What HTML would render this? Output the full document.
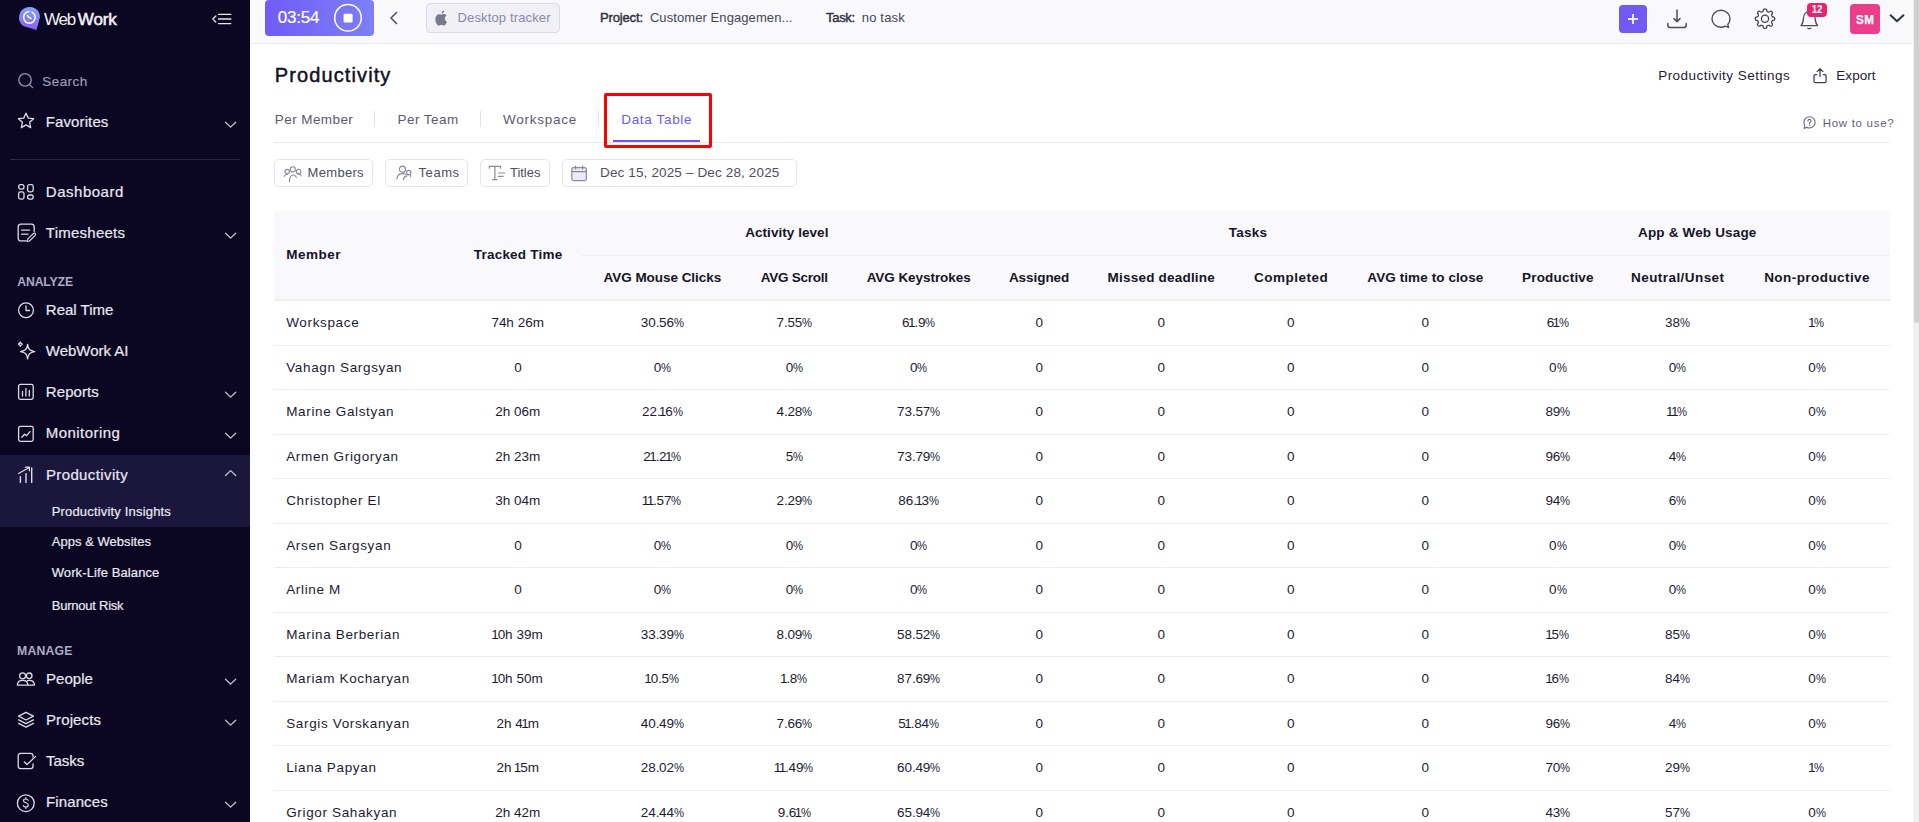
<!DOCTYPE html>
<html><head><meta charset="utf-8"><style>
html,body{margin:0;padding:0;}
body{width:1919px;height:822px;overflow:hidden;position:relative;background:#fff;font-family:"Liberation Sans",sans-serif;}
.t{position:absolute;line-height:1;white-space:nowrap;}
.sb{-webkit-text-stroke:0.2px currentColor;}
.pc{display:inline-block;width:10px;transform:scaleX(0.833);transform-origin:0 0;}
svg{display:block;}
</style></head><body>
<div style="position:absolute;left:0px;top:0px;width:250px;height:822px;background:#0b0722;"></div><div style="position:absolute;left:0px;top:455px;width:250px;height:72px;background:#1b163c;"></div><svg style="position:absolute;left:17px;top:5px;" width="26" height="28" viewBox="0 0 26 28" fill="none"><defs><linearGradient id="lg" x1="0" y1="0" x2="0" y2="1"><stop offset="0" stop-color="#7ea6ff"/><stop offset="1" stop-color="#8a5cf5"/></linearGradient></defs>
<path d="M13.2 2.1 C19.4 2.3 23 6.8 22.9 12.5 L19.5 24.9 L8.6 21.7 C4.2 20.4 2 16.9 2 12.7 C2 6.5 6.8 1.9 13.2 2.1 Z" fill="url(#lg)"/>
<path d="M14.85 7.14 A5.8 5.8 0 1 1 11.9 6.62" stroke="#fff" stroke-width="1.5" stroke-linecap="round"/>
<path d="M10.4 10.45 L12.3 12.7 L14.1 13.4" stroke="#fff" stroke-width="1.4" stroke-linecap="round" stroke-linejoin="round"/></svg><div class="t" style="left:44.00px;top:11.00px;font-size:17px;color:#f2f1f8;letter-spacing:-1.190px;">Web</div><div class="t" style="left:77.80px;top:11.00px;font-size:17px;color:#f2f1f8;letter-spacing:-0.113px;-webkit-text-stroke:0.55px #f2f1f8;">Work</div><svg style="position:absolute;left:210px;top:12px;" width="24" height="14" viewBox="0 0 24 14" fill="none"><path d="M5.8 4 L2.8 7 L5.8 10" stroke="#e6e4ef" stroke-width="1.3" stroke-linecap="round" stroke-linejoin="round"/>
<path d="M8.5 2.4 H20.8 M8.5 7 H20.8 M8.5 11.6 H20.8" stroke="#e6e4ef" stroke-width="1.4" stroke-linecap="round"/></svg><svg style="position:absolute;left:16px;top:72px;" width="20" height="18" viewBox="0 0 20 18" fill="none"><circle cx="9" cy="7.9" r="6.2" stroke="#9794ae" stroke-width="1.3"/><path d="M13.4 12.4 L16.6 15.6" stroke="#9794ae" stroke-width="1.3" stroke-linecap="round"/></svg><div class="t sb" style="left:42.30px;top:75.00px;font-size:13.5px;color:#9d9ab4;letter-spacing:0.421px;">Search</div><svg style="position:absolute;left:16px;top:111px;" width="20" height="20" viewBox="0 0 20 20" fill="none"><path d="M10 2.2 L12.3 7.1 L17.6 7.7 L13.6 11.3 L14.7 16.6 L10 13.9 L5.3 16.6 L6.4 11.3 L2.4 7.7 L7.7 7.1 Z" stroke="#dddbe8" stroke-width="1.3" stroke-linejoin="round"/></svg><div class="t sb" style="left:45.80px;top:114.00px;font-size:15px;color:#e9e8f3;letter-spacing:0.106px;">Favorites</div><svg style="position:absolute;left:222px;top:119px;" width="16" height="10" viewBox="0 0 16 10" fill="none"><path d="M3.5 3.2 L8.6 8.1 L13.7 3.2" stroke="#c6c4d3" stroke-width="1.3" stroke-linecap="round" stroke-linejoin="round"/></svg><div style="position:absolute;left:10px;top:159px;width:230px;height:1px;background:#2c2946;"></div><svg style="position:absolute;left:16px;top:183px;" width="20" height="20" viewBox="0 0 20 20" fill="none"><rect x="2.6" y="1.7" width="5.4" height="4.4" rx="2" stroke="#dddbe8" stroke-width="1.3"/>
<rect x="2.6" y="8.9" width="5.4" height="7.2" rx="1.8" stroke="#dddbe8" stroke-width="1.3"/>
<rect x="11.6" y="1.7" width="5.6" height="7.1" rx="1.8" stroke="#dddbe8" stroke-width="1.3"/>
<rect x="11.6" y="12" width="5.6" height="4.1" rx="2" stroke="#dddbe8" stroke-width="1.3"/></svg><div class="t sb" style="left:45.80px;top:184.00px;font-size:15px;color:#e9e8f3;letter-spacing:0.519px;">Dashboard</div><svg style="position:absolute;left:16px;top:223px;" width="22" height="22" viewBox="0 0 22 22" fill="none"><path d="M10.2 17.9 H5 C3.2 17.9 2.2 16.9 2.2 15.1 V4 C2.2 2.2 3.2 1.2 5 1.2 H15.4 C17.2 1.2 18.2 2.2 18.2 4 V8.6" stroke="#dddbe8" stroke-width="1.3" stroke-linecap="round"/>
<path d="M5.6 7.2 H13.4 M5.6 11.2 H12" stroke="#dddbe8" stroke-width="1.3" stroke-linecap="round"/>
<path d="M11.2 18.4 L11.7 16.2 L17.4 10.5 C17.9 10 18.7 10 19.2 10.5 C19.7 11 19.7 11.8 19.2 12.3 L13.5 18 Z" stroke="#dddbe8" stroke-width="1.1" stroke-linejoin="round"/></svg><div class="t sb" style="left:45.80px;top:225.00px;font-size:15px;color:#e9e8f3;letter-spacing:0.250px;">Timesheets</div><svg style="position:absolute;left:222px;top:230px;" width="16" height="10" viewBox="0 0 16 10" fill="none"><path d="M3.5 3.2 L8.6 8.1 L13.7 3.2" stroke="#c6c4d3" stroke-width="1.3" stroke-linecap="round" stroke-linejoin="round"/></svg><div class="t" style="left:17.30px;top:276.00px;font-size:12.2px;color:#aeabc4;font-weight:bold;letter-spacing:-0.114px;">ANALYZE</div><svg style="position:absolute;left:16px;top:300px;" width="20" height="20" viewBox="0 0 20 20" fill="none"><circle cx="10" cy="10.2" r="7.4" stroke="#dddbe8" stroke-width="1.3"/><path d="M10 6 V10.5 H13.5" stroke="#dddbe8" stroke-width="1.3" stroke-linecap="round" stroke-linejoin="round"/></svg><div class="t sb" style="left:45.80px;top:302.00px;font-size:15px;color:#e9e8f3;">Real Time</div><svg style="position:absolute;left:16px;top:340px;" width="21" height="21" viewBox="0 0 21 21" fill="none"><path d="M11.6 4.4 C12.3 9.3 13.6 10.6 18.6 11.6 C13.6 12.6 12.3 13.9 11.6 18.8 C10.9 13.9 9.6 12.6 4.6 11.6 C9.6 10.6 10.9 9.3 11.6 4.4 Z" stroke="#dddbe8" stroke-width="1.3" stroke-linejoin="round"/>
<path d="M4.3 1.6 C4.5 3.4 4.9 3.8 6.6 4.1 C4.9 4.4 4.5 4.8 4.3 6.6 C4.1 4.8 3.7 4.4 2 4.1 C3.7 3.8 4.1 3.4 4.3 1.6 Z" stroke="#dddbe8" stroke-width="1.1" stroke-linecap="round"/></svg><div class="t sb" style="left:45.80px;top:343.00px;font-size:15px;color:#e9e8f3;letter-spacing:-0.022px;">WebWork AI</div><svg style="position:absolute;left:16px;top:382px;" width="20" height="20" viewBox="0 0 20 20" fill="none"><rect x="2.6" y="2.4" width="14.6" height="15" rx="1.8" stroke="#dddbe8" stroke-width="1.3"/><path d="M6.5 14 V9.5 M9.9 14 V6.5 M13.3 14 V8.5" stroke="#dddbe8" stroke-width="1.3" stroke-linecap="round"/></svg><div class="t sb" style="left:45.80px;top:384.00px;font-size:15px;color:#e9e8f3;letter-spacing:0.083px;">Reports</div><svg style="position:absolute;left:222px;top:389px;" width="16" height="10" viewBox="0 0 16 10" fill="none"><path d="M3.5 3.2 L8.6 8.1 L13.7 3.2" stroke="#c6c4d3" stroke-width="1.3" stroke-linecap="round" stroke-linejoin="round"/></svg><svg style="position:absolute;left:16px;top:424px;" width="20" height="20" viewBox="0 0 20 20" fill="none"><rect x="2.6" y="2.4" width="14.6" height="15" rx="1.8" stroke="#dddbe8" stroke-width="1.3"/><path d="M5.8 13.2 L8.6 10.2 L10.6 11.6 L14 7.6" stroke="#dddbe8" stroke-width="1.3" stroke-linecap="round" stroke-linejoin="round"/></svg><div class="t sb" style="left:45.80px;top:425.00px;font-size:15px;color:#e9e8f3;letter-spacing:0.439px;">Monitoring</div><svg style="position:absolute;left:222px;top:430px;" width="16" height="10" viewBox="0 0 16 10" fill="none"><path d="M3.5 3.2 L8.6 8.1 L13.7 3.2" stroke="#c6c4d3" stroke-width="1.3" stroke-linecap="round" stroke-linejoin="round"/></svg><svg style="position:absolute;left:16px;top:465px;" width="20" height="20" viewBox="0 0 20 20" fill="none"><path d="M4.4 17.4 V11.6 M10 17.4 V8.6 M15.7 17.4 V3" stroke="#dddbe8" stroke-width="1.4" stroke-linecap="round"/><path d="M2.6 8.6 L13.2 2.4 M9.4 2.2 H13.4 V5.8" stroke="#dddbe8" stroke-width="1.2" stroke-linecap="round" stroke-linejoin="round"/></svg><div class="t sb" style="left:45.90px;top:467.00px;font-size:15px;color:#e9e8f3;letter-spacing:0.386px;">Productivity</div><svg style="position:absolute;left:222px;top:468px;" width="16" height="10" viewBox="0 0 16 10" fill="none"><path d="M3.5 7.5 L8.6 2.6 L13.7 7.5" stroke="#c6c4d3" stroke-width="1.3" stroke-linecap="round" stroke-linejoin="round"/></svg><div class="t sb" style="left:51.70px;top:505.00px;font-size:13px;color:#e9e8f3;letter-spacing:0.178px;">Productivity Insights</div><div class="t sb" style="left:51.70px;top:535.00px;font-size:13px;color:#e9e8f3;letter-spacing:0.040px;">Apps &amp; Websites</div><div class="t sb" style="left:51.70px;top:566.00px;font-size:13px;color:#e9e8f3;letter-spacing:0.103px;">Work-Life Balance</div><div class="t sb" style="left:51.70px;top:599.00px;font-size:13px;color:#e9e8f3;letter-spacing:-0.226px;">Burnout Risk</div><div class="t" style="left:17.00px;top:645.00px;font-size:12.2px;color:#aeabc4;font-weight:bold;letter-spacing:0.234px;">MANAGE</div><svg style="position:absolute;left:15px;top:670px;" width="22" height="18" viewBox="0 0 22 18" fill="none"><circle cx="7.6" cy="5.8" r="3" stroke="#dddbe8" stroke-width="1.3"/>
<circle cx="14.2" cy="5.8" r="2.8" stroke="#dddbe8" stroke-width="1.3"/>
<path d="M2.4 15.2 C2.4 12 4.6 10.4 7.6 10.4 C10.6 10.4 12.8 12 12.8 15.2 Z" stroke="#dddbe8" stroke-width="1.3" stroke-linejoin="round"/>
<path d="M12.4 10.6 C12.9 10.5 13.5 10.4 14.2 10.4 C17.2 10.4 19.4 12 19.4 15.2 H13" stroke="#dddbe8" stroke-width="1.3" stroke-linecap="round" stroke-linejoin="round"/></svg><div class="t sb" style="left:46.00px;top:671.00px;font-size:15px;color:#e9e8f3;letter-spacing:0.035px;">People</div><svg style="position:absolute;left:222px;top:676px;" width="16" height="10" viewBox="0 0 16 10" fill="none"><path d="M3.5 3.2 L8.6 8.1 L13.7 3.2" stroke="#c6c4d3" stroke-width="1.3" stroke-linecap="round" stroke-linejoin="round"/></svg><svg style="position:absolute;left:16px;top:710px;" width="20" height="20" viewBox="0 0 20 20" fill="none"><path d="M10 2.4 L17.4 6.2 L10 10 L2.6 6.2 Z" stroke="#dddbe8" stroke-width="1.3" stroke-linejoin="round"/>
<path d="M2.6 9.8 L10 13.6 L17.4 9.8 M2.6 13.4 L10 17.2 L17.4 13.4" stroke="#dddbe8" stroke-width="1.3" stroke-linecap="round" stroke-linejoin="round"/></svg><div class="t sb" style="left:46.00px;top:712.00px;font-size:15px;color:#e9e8f3;letter-spacing:0.107px;">Projects</div><svg style="position:absolute;left:222px;top:717px;" width="16" height="10" viewBox="0 0 16 10" fill="none"><path d="M3.5 3.2 L8.6 8.1 L13.7 3.2" stroke="#c6c4d3" stroke-width="1.3" stroke-linecap="round" stroke-linejoin="round"/></svg><svg style="position:absolute;left:16px;top:751px;" width="22" height="20" viewBox="0 0 22 20" fill="none"><path d="M17 6 V4.8 C17 3.4 16 2.4 14.6 2.4 H4.6 C3.2 2.4 2.2 3.4 2.2 4.8 V15.2 C2.2 16.6 3.2 17.6 4.6 17.6 H14.6 C16 17.6 17 16.6 17 15.2 V13" stroke="#dddbe8" stroke-width="1.3" stroke-linecap="round"/>
<path d="M8.4 11 L11 13.6 L19.6 5.4" stroke="#dddbe8" stroke-width="1.3" stroke-linecap="round" stroke-linejoin="round"/></svg><div class="t sb" style="left:46.00px;top:753.00px;font-size:15px;color:#e9e8f3;letter-spacing:-0.031px;">Tasks</div><svg style="position:absolute;left:15px;top:792px;" width="22" height="22" viewBox="0 0 22 22" fill="none"><circle cx="10.8" cy="11.2" r="8.4" stroke="#dddbe8" stroke-width="1.3"/>
<path d="M13.2 8.4 C12.8 7.4 12 7 10.8 7 C9.4 7 8.5 7.7 8.5 8.8 C8.5 11.2 13.3 10.4 13.3 13 C13.3 14.2 12.2 15 10.8 15 C9.4 15 8.6 14.4 8.3 13.5 M10.8 5.6 V7 M10.8 15 V16.6" stroke="#dddbe8" stroke-width="1.2" stroke-linecap="round"/></svg><div class="t sb" style="left:46.00px;top:794.00px;font-size:15px;color:#e9e8f3;letter-spacing:0.114px;">Finances</div><svg style="position:absolute;left:222px;top:799px;" width="16" height="10" viewBox="0 0 16 10" fill="none"><path d="M3.5 3.2 L8.6 8.1 L13.7 3.2" stroke="#c6c4d3" stroke-width="1.3" stroke-linecap="round" stroke-linejoin="round"/></svg>
<div style="position:absolute;left:250px;top:0px;width:1663px;height:43px;background:#f9f9fb;"></div><div style="position:absolute;left:250px;top:0px;width:1px;height:44px;background:#ffffff;"></div><div style="position:absolute;left:251px;top:43px;width:1662px;height:1px;background:#ebeaf4;"></div><div style="position:absolute;left:265px;top:0px;width:109px;height:36px;border-radius:4px;background:linear-gradient(90deg,#715cf6,#7d7ff8);"></div><div class="t sb" style="left:277.80px;top:9.00px;font-size:17px;color:#ffffff;letter-spacing:-0.221px;">03:54</div><svg style="position:absolute;left:333px;top:3px;" width="30" height="30" viewBox="0 0 30 30" fill="none"><circle cx="15" cy="14.8" r="13.3" stroke="#fff" stroke-width="1.5"/><rect x="10.6" y="10.8" width="9" height="8.8" rx="1" fill="#fff"/></svg><svg style="position:absolute;left:386px;top:9px;" width="14" height="18" viewBox="0 0 14 18" fill="none"><path d="M10.5 3.5 L5 9 L10.5 14.5" stroke="#4d4b5e" stroke-width="1.5" stroke-linecap="round" stroke-linejoin="round"/></svg><div style="position:absolute;left:426px;top:3px;width:131.5px;height:27.8px;border:1px solid #dcdaea;border-radius:4px;background:#f1f0f6;"></div><svg style="position:absolute;left:433px;top:9px;" width="16" height="18" viewBox="0 0 16 18" fill="none"><path d="M11.2 1.5 C11.2 3 10 4.4 8.6 4.4 C8.5 3 9.6 1.6 11.2 1.5 Z" fill="#7b7891"/><path d="M8.2 5.6 C9 5.6 9.8 5 10.8 5 C12 5 13 5.6 13.6 6.6 C12.4 7.4 11.8 8.4 11.9 9.8 C12 11.2 12.8 12.2 14 12.8 C13.4 14.6 12.2 16.6 10.9 16.6 C10 16.6 9.6 16 8.4 16 C7.2 16 6.8 16.6 5.9 16.6 C4.4 16.6 2.4 13.4 2.4 10.4 C2.4 7.4 4.2 5.2 6.2 5.2 C7 5.2 7.6 5.6 8.2 5.6 Z" fill="#7b7891"/></svg><div class="t" style="left:457.50px;top:11.00px;font-size:13px;color:#8b88a3;letter-spacing:0.145px;">Desktop tracker</div><div class="t" style="left:600.00px;top:11.00px;font-size:13px;color:#34333f;letter-spacing:-0.153px;-webkit-text-stroke:0.45px #34333f;">Project:</div><div class="t" style="left:649.90px;top:11.00px;font-size:13px;color:#46455a;letter-spacing:0.084px;">Customer Engagemen...</div><div class="t" style="left:826.00px;top:11.00px;font-size:13px;color:#34333f;letter-spacing:-0.289px;-webkit-text-stroke:0.45px #34333f;">Task:</div><div class="t" style="left:861.80px;top:11.00px;font-size:13px;color:#46455a;letter-spacing:0.168px;">no task</div><div style="position:absolute;left:1619px;top:5px;width:28px;height:28px;border-radius:4px;background:#7159f6;"></div><svg style="position:absolute;left:1619px;top:5px;" width="28" height="28" viewBox="0 0 28 28" fill="none"><path d="M14 9 V19 M9 14 H19" stroke="#ebe7ff" stroke-width="2" stroke-linecap="butt"/></svg><svg style="position:absolute;left:1665px;top:8px;" width="24" height="22" viewBox="0 0 24 22" fill="none"><path d="M12 2 V13.5 M9 10.6 L12 13.6 L15 10.6" stroke="#4c4f58" stroke-width="1.5" stroke-linecap="round" stroke-linejoin="round"/><path d="M2.8 15.6 V17 C2.8 18.8 3.8 19.6 5.4 19.6 H18.6 C20.2 19.6 21.2 18.8 21.2 17 V15.6" stroke="#4c4f58" stroke-width="1.5" stroke-linecap="round"/></svg><svg style="position:absolute;left:1710px;top:8px;" width="24" height="22" viewBox="0 0 24 22" fill="none"><path d="M18.6 19.4 L17.8 16.4 C19.3 14.9 20 12.9 20 10.7 C20 5.9 16 2.2 11 2.2 C6 2.2 2 5.9 2 10.7 C2 15.5 6 19.2 11 19.2 C12.6 19.2 14 18.8 15.3 18.1 Z" stroke="#4c4f58" stroke-width="1.4" stroke-linejoin="round"/></svg><svg style="position:absolute;left:1753px;top:7px;" width="24" height="24" viewBox="0 0 24 24" fill="none"><path d="M12.00 2.00 L12.25 2.01 L12.51 2.03 L12.76 2.07 L13.00 2.14 L13.24 2.29 L13.45 2.57 L13.61 3.03 L13.72 3.60 L13.83 4.06 L13.97 4.35 L14.13 4.52 L14.30 4.63 L14.47 4.71 L14.65 4.79 L14.83 4.86 L15.01 4.94 L15.19 5.01 L15.38 5.07 L15.57 5.12 L15.80 5.11 L16.10 5.00 L16.51 4.75 L16.99 4.43 L17.44 4.22 L17.78 4.17 L18.05 4.23 L18.28 4.35 L18.48 4.50 L18.68 4.67 L18.86 4.84 L19.03 5.02 L19.20 5.22 L19.35 5.42 L19.47 5.65 L19.53 5.92 L19.48 6.26 L19.27 6.71 L18.95 7.19 L18.70 7.60 L18.59 7.90 L18.58 8.13 L18.63 8.32 L18.69 8.51 L18.76 8.69 L18.84 8.87 L18.91 9.05 L18.99 9.23 L19.07 9.40 L19.18 9.57 L19.35 9.73 L19.64 9.87 L20.10 9.98 L20.67 10.09 L21.13 10.25 L21.41 10.46 L21.56 10.70 L21.63 10.94 L21.67 11.19 L21.69 11.45 L21.70 11.70 L21.69 11.95 L21.67 12.21 L21.63 12.46 L21.56 12.70 L21.41 12.94 L21.13 13.15 L20.67 13.31 L20.10 13.42 L19.64 13.53 L19.35 13.67 L19.18 13.83 L19.07 14.00 L18.99 14.17 L18.91 14.35 L18.84 14.53 L18.76 14.71 L18.69 14.89 L18.63 15.08 L18.58 15.27 L18.59 15.50 L18.70 15.80 L18.95 16.21 L19.27 16.69 L19.48 17.14 L19.53 17.48 L19.47 17.75 L19.35 17.98 L19.20 18.18 L19.03 18.38 L18.86 18.56 L18.68 18.73 L18.48 18.90 L18.28 19.05 L18.05 19.17 L17.78 19.23 L17.44 19.18 L16.99 18.97 L16.51 18.65 L16.10 18.40 L15.80 18.29 L15.57 18.28 L15.38 18.33 L15.19 18.39 L15.01 18.46 L14.83 18.54 L14.65 18.61 L14.47 18.69 L14.30 18.77 L14.13 18.88 L13.97 19.05 L13.83 19.34 L13.72 19.80 L13.61 20.37 L13.45 20.83 L13.24 21.11 L13.00 21.26 L12.76 21.33 L12.51 21.37 L12.25 21.39 L12.00 21.40 L11.75 21.39 L11.49 21.37 L11.24 21.33 L11.00 21.26 L10.76 21.11 L10.55 20.83 L10.39 20.37 L10.28 19.80 L10.17 19.34 L10.03 19.05 L9.87 18.88 L9.70 18.77 L9.53 18.69 L9.35 18.61 L9.17 18.54 L8.99 18.46 L8.81 18.39 L8.62 18.33 L8.43 18.28 L8.20 18.29 L7.90 18.40 L7.49 18.65 L7.01 18.97 L6.56 19.18 L6.22 19.23 L5.95 19.17 L5.72 19.05 L5.52 18.90 L5.32 18.73 L5.14 18.56 L4.97 18.38 L4.80 18.18 L4.65 17.98 L4.53 17.75 L4.47 17.48 L4.52 17.14 L4.73 16.69 L5.05 16.21 L5.30 15.80 L5.41 15.50 L5.42 15.27 L5.37 15.08 L5.31 14.89 L5.24 14.71 L5.16 14.53 L5.09 14.35 L5.01 14.17 L4.93 14.00 L4.82 13.83 L4.65 13.67 L4.36 13.53 L3.90 13.42 L3.33 13.31 L2.87 13.15 L2.59 12.94 L2.44 12.70 L2.37 12.46 L2.33 12.21 L2.31 11.95 L2.30 11.70 L2.31 11.45 L2.33 11.19 L2.37 10.94 L2.44 10.70 L2.59 10.46 L2.87 10.25 L3.33 10.09 L3.90 9.98 L4.36 9.87 L4.65 9.73 L4.82 9.57 L4.93 9.40 L5.01 9.23 L5.09 9.05 L5.16 8.87 L5.24 8.69 L5.31 8.51 L5.37 8.32 L5.42 8.13 L5.41 7.90 L5.30 7.60 L5.05 7.19 L4.73 6.71 L4.52 6.26 L4.47 5.92 L4.53 5.65 L4.65 5.42 L4.80 5.22 L4.97 5.02 L5.14 4.84 L5.32 4.67 L5.52 4.50 L5.72 4.35 L5.95 4.23 L6.22 4.17 L6.56 4.22 L7.01 4.43 L7.49 4.75 L7.90 5.00 L8.20 5.11 L8.43 5.12 L8.62 5.07 L8.81 5.01 L8.99 4.94 L9.17 4.86 L9.35 4.79 L9.53 4.71 L9.70 4.63 L9.87 4.52 L10.03 4.35 L10.17 4.06 L10.28 3.60 L10.39 3.03 L10.55 2.57 L10.76 2.29 L11.00 2.14 L11.24 2.07 L11.49 2.03 L11.75 2.01 Z" stroke="#40424c" stroke-width="1.25" stroke-linejoin="round"/><circle cx="12" cy="11.7" r="3.6" stroke="#40424c" stroke-width="1.25"/></svg><svg style="position:absolute;left:1798px;top:8px;" width="24" height="24" viewBox="0 0 24 24" fill="none"><path d="M3 17.6 H19.6 C18.2 16.2 17.4 14.2 17.2 10.6 C17 6.4 14.6 3.4 11.3 3.4 C8 3.4 5.6 6.4 5.4 10.6 C5.2 14.2 4.4 16.2 3 17.6 Z" stroke="#4c4f58" stroke-width="1.3" stroke-linejoin="round"/><path d="M9.8 20.2 C10.4 20.9 12.2 20.9 12.8 20.2" stroke="#4c4f58" stroke-width="1.3" stroke-linecap="round"/></svg><div style="position:absolute;left:1807px;top:3px;width:20px;height:14px;border-radius:4px;background:#e6246f;"></div><div class="t" style="left:1807px;width:20px;text-align:center;top:4px;font-size:10.5px;font-weight:bold;color:#fff;letter-spacing:-0.2px;text-indent:-0.2px;transform:scaleX(0.92);">12</div><div style="position:absolute;left:1850px;top:4px;width:30px;height:30px;border-radius:4px;background:#ea3e8b;"></div><div class="t" style="left:1850px;width:30px;text-align:center;top:13px;font-size:13.5px;font-weight:bold;color:#fff;letter-spacing:0.6px;text-indent:0.6px;transform:scaleX(0.86);-webkit-text-stroke:0.25px #fff;">SM</div><svg style="position:absolute;left:1888px;top:12px;" width="18" height="12" viewBox="0 0 18 12" fill="none"><path d="M2.6 3.2 L9 9.2 L15.4 3.2" stroke="#2e3645" stroke-width="2" stroke-linecap="round" stroke-linejoin="round"/></svg><div style="position:absolute;left:1913px;top:0px;width:6px;height:822px;background:#f0f0f0;"></div><div style="position:absolute;left:1913.5px;top:0px;width:5.5px;height:323px;background:#d0d0d0;border-radius:0 0 3px 3px;"></div>
<div class="t" style="left:274.80px;top:65.00px;font-size:20px;color:#110f22;letter-spacing:1.109px;-webkit-text-stroke:0.45px #110f22;">Productivity</div><div class="t" style="left:1658.20px;top:69.00px;font-size:13.5px;color:#1f1d33;letter-spacing:0.464px;">Productivity Settings</div><svg style="position:absolute;left:1810px;top:65px;" width="20" height="20" viewBox="0 0 20 20" fill="none"><path d="M6.8 9.6 H5.2 C4.4 9.6 4 10 4 10.8 V16.4 C4 17.2 4.4 17.6 5.2 17.6 H14.9 C15.7 17.6 16.1 17.2 16.1 16.4 V10.8 C16.1 10 15.7 9.6 14.9 9.6 H13.3" stroke="#3e4150" stroke-width="1.25" stroke-linecap="round"/><path d="M10.05 11.6 V3.8 M7.1 6.6 L10.05 3.6 L13 6.6" stroke="#3e4150" stroke-width="1.25" stroke-linecap="round" stroke-linejoin="round"/></svg><div class="t" style="left:1836.30px;top:69.00px;font-size:13.5px;color:#1f1d33;letter-spacing:0.037px;">Export</div><div class="t" style="left:274.80px;top:113.00px;font-size:13.5px;color:#5c5a73;letter-spacing:0.417px;">Per Member</div><div style="position:absolute;left:373.5px;top:111.4px;width:1.2px;height:15.2px;background:#e2e0f0;"></div><div class="t" style="left:397.60px;top:113.00px;font-size:13.5px;color:#5c5a73;letter-spacing:0.441px;">Per Team</div><div style="position:absolute;left:479.5px;top:111.4px;width:1.2px;height:15.2px;background:#e2e0f0;"></div><div class="t" style="left:503.10px;top:113.00px;font-size:13.5px;color:#5c5a73;letter-spacing:0.738px;">Workspace</div><div style="position:absolute;left:597.5px;top:111.4px;width:1.2px;height:15.2px;background:#e2e0f0;"></div><div class="t" style="left:621.30px;top:113.00px;font-size:13.5px;color:#7257f6;letter-spacing:0.653px;">Data Table</div><div style="position:absolute;left:274px;top:142px;width:1616px;height:1px;background:#e9e7f4;"></div><div style="position:absolute;left:613px;top:140px;width:87px;height:2px;background:#6b54f5;"></div><div style="position:absolute;left:604px;top:93px;width:102px;height:48.5px;border:3px solid #ff0000;border-radius:2px;"></div><svg style="position:absolute;left:1802px;top:115px;" width="15" height="15" viewBox="0 0 15 15" fill="none"><path d="M2.2 13.4 L2.8 10.4 C2.2 9.5 1.9 8.5 1.9 7.4 C1.9 4.3 4.4 1.8 7.5 1.8 C10.6 1.8 13.1 4.3 13.1 7.4 C13.1 10.5 10.6 13 7.5 13 C6.4 13 5.4 12.7 4.6 12.2 Z" stroke="#6a6883" stroke-width="1.1" stroke-linejoin="round"/><path d="M5.9 6 C5.9 5 6.6 4.4 7.5 4.4 C8.4 4.4 9.1 5 9.1 5.9 C9.1 7 7.6 7.2 7.6 8.4" stroke="#6a6883" stroke-width="1.1" stroke-linecap="round"/><circle cx="7.6" cy="10.2" r="0.7" fill="#6a6883"/></svg><div class="t" style="left:1822.70px;top:118.00px;font-size:11.5px;color:#5f5d79;letter-spacing:0.706px;">How to use?</div><div style="position:absolute;left:274px;top:159px;width:96.7px;height:25.5px;border:1px solid #e6e4f1;border-radius:5px;background:#fff;"></div><div style="position:absolute;left:385px;top:159px;width:80.6px;height:25.5px;border:1px solid #e6e4f1;border-radius:5px;background:#fff;"></div><div style="position:absolute;left:480px;top:159px;width:67.8px;height:25.5px;border:1px solid #e6e4f1;border-radius:5px;background:#fff;"></div><div style="position:absolute;left:562px;top:159px;width:232.7px;height:25.5px;border:1px solid #e6e4f1;border-radius:5px;background:#fff;"></div><svg style="position:absolute;left:282px;top:163px;" width="22" height="20" viewBox="0 0 22 20" fill="none"><circle cx="5.2" cy="8.6" r="2.2" stroke="#8b8a9c" stroke-width="1.1"/><circle cx="10.8" cy="6.3" r="2.6" stroke="#8b8a9c" stroke-width="1.1"/><circle cx="16.6" cy="8.5" r="2.3" stroke="#8b8a9c" stroke-width="1.1"/>
<path d="M2.3 13.4 C2.7 12 3.8 11.2 5.6 11.2 M19.2 13 C18.8 11.8 17.8 11.2 16.2 11.3 M7.4 18.6 C7.6 14.6 9.2 12 11.2 12 C12.8 12 13.8 13 14.4 14.6" stroke="#8b8a9c" stroke-width="1.1" stroke-linecap="round"/></svg><div class="t" style="left:307.60px;top:166.00px;font-size:13px;color:#4f4d66;letter-spacing:0.298px;">Members</div><svg style="position:absolute;left:395px;top:164px;" width="18" height="18" viewBox="0 0 18 18" fill="none"><circle cx="7.5" cy="5.2" r="3.1" stroke="#8b8a9c" stroke-width="1.2"/><path d="M1.9 14.8 C2.3 11.5 4.5 9.7 7.4 9.7 C8.7 9.7 9.8 10 10.6 10.5" stroke="#8b8a9c" stroke-width="1.2" stroke-linecap="round"/>
<circle cx="13.7" cy="8.6" r="2.2" stroke="#8b8a9c" stroke-width="1.2"/><path d="M8.4 15.7 C8.7 13.6 10 12.2 12 11.9 M15.6 11.2 V12.6" stroke="#8b8a9c" stroke-width="1.2" stroke-linecap="round"/></svg><div class="t" style="left:418.60px;top:166.00px;font-size:13px;color:#4f4d66;letter-spacing:0.529px;">Teams</div><svg style="position:absolute;left:487px;top:164px;" width="20" height="18" viewBox="0 0 20 18" fill="none"><path d="M2.4 4.2 V2.4 H13.4 V4.2 M7.9 2.4 V15.6 M5.6 15.6 H10.2" stroke="#8b8a9c" stroke-width="1.2" stroke-linecap="round" stroke-linejoin="round"/>
<path d="M11.6 9 H17.6 M11.6 12.4 H16" stroke="#8b8a9c" stroke-width="1.2" stroke-linecap="round"/></svg><div class="t" style="left:510.00px;top:166.00px;font-size:13px;color:#4f4d66;letter-spacing:-0.030px;">Titles</div><svg style="position:absolute;left:569px;top:164px;" width="20" height="19" viewBox="0 0 20 19" fill="none"><rect x="2.8" y="3.6" width="14.6" height="13" rx="1.8" fill="#ebe9f3" stroke="#8b8a9c" stroke-width="1.2"/><path d="M2.8 7.6 H17.4 M6.6 2 V5 M13.6 2 V5" stroke="#8b8a9c" stroke-width="1.2" stroke-linecap="round"/></svg><div class="t" style="left:600.00px;top:166.00px;font-size:13.5px;color:#4f4d66;letter-spacing:0.141px;">Dec 15, 2025 – Dec 28, 2025</div>
<div style="position:absolute;left:274px;top:211px;width:1616px;height:88px;background:#f9f9fb;"></div><div style="position:absolute;left:582px;top:255px;width:1308px;height:1px;background:#eceef3;"></div><div style="position:absolute;left:274px;top:299px;width:1616px;height:2px;background:#eceef3;"></div><div class="t" style="left:286.20px;top:248.00px;font-size:13.5px;color:#16142a;font-weight:bold;letter-spacing:0.505px;">Member</div><div class="t" style="left:473.70px;top:248.00px;font-size:13.5px;color:#16142a;font-weight:bold;letter-spacing:0.231px;">Tracked Time</div><div class="t" style="left:745.20px;top:226.00px;font-size:13.5px;color:#16142a;font-weight:bold;letter-spacing:0.050px;">Activity level</div><div class="t" style="left:1228.65px;top:226.00px;font-size:13.5px;color:#16142a;font-weight:bold;letter-spacing:0.260px;">Tasks</div><div class="t" style="left:1638.00px;top:226.00px;font-size:13.5px;color:#16142a;font-weight:bold;letter-spacing:0.169px;">App &amp; Web Usage</div><div class="t" style="left:603.60px;top:271.00px;font-size:13.5px;color:#16142a;font-weight:bold;letter-spacing:-0.044px;">AVG Mouse Clicks</div><div class="t" style="left:760.80px;top:271.00px;font-size:13.5px;color:#16142a;font-weight:bold;letter-spacing:-0.258px;">AVG Scroll</div><div class="t" style="left:866.70px;top:271.00px;font-size:13.5px;color:#16142a;font-weight:bold;letter-spacing:-0.064px;">AVG Keystrokes</div><div class="t" style="left:1008.90px;top:271.00px;font-size:13.5px;color:#16142a;font-weight:bold;letter-spacing:-0.050px;">Assigned</div><div class="t" style="left:1107.60px;top:271.00px;font-size:13.5px;color:#16142a;font-weight:bold;letter-spacing:0.208px;">Missed deadline</div><div class="t" style="left:1254.00px;top:271.00px;font-size:13.5px;color:#16142a;font-weight:bold;letter-spacing:0.484px;">Completed</div><div class="t" style="left:1367.30px;top:271.00px;font-size:13.5px;color:#16142a;font-weight:bold;letter-spacing:0.091px;">AVG time to close</div><div class="t" style="left:1522.00px;top:271.00px;font-size:13.5px;color:#16142a;font-weight:bold;letter-spacing:0.201px;">Productive</div><div class="t" style="left:1631.00px;top:271.00px;font-size:13.5px;color:#16142a;font-weight:bold;letter-spacing:0.438px;">Neutral/Unset</div><div class="t" style="left:1764.20px;top:271.00px;font-size:13.5px;color:#16142a;font-weight:bold;letter-spacing:0.433px;">Non-productive</div><div class="t" style="left:286.20px;top:316.00px;font-size:13.5px;color:#1d1b31;letter-spacing:0.65px;">Workspace</div><div class="t" style="left:368.00px;width:300px;text-align:center;top:316.00px;font-size:13.5px;color:#1d1b31;"><span style="letter-spacing:-0.1px">7</span><span style="letter-spacing:-0.1px">4</span><span style="letter-spacing:0.6px">h</span><span style="letter-spacing:-0.4px"> </span><span style="letter-spacing:-0.1px">2</span><span style="letter-spacing:-0.1px">6</span><span style="letter-spacing:0.6px">m</span></div><div class="t" style="left:512.40px;width:300px;text-align:center;top:316.00px;font-size:13.5px;color:#1d1b31;"><span style="letter-spacing:-0.1px">3</span><span style="letter-spacing:-0.1px">0</span><span style="letter-spacing:-0.3px">.</span><span style="letter-spacing:-0.1px">5</span><span style="letter-spacing:-0.1px">6</span><span class="pc">%</span></div><div class="t" style="left:644.40px;width:300px;text-align:center;top:316.00px;font-size:13.5px;color:#1d1b31;"><span style="letter-spacing:-0.1px">7</span><span style="letter-spacing:-0.3px">.</span><span style="letter-spacing:-0.1px">5</span><span style="letter-spacing:-0.1px">5</span><span class="pc">%</span></div><div class="t" style="left:768.70px;width:300px;text-align:center;top:316.00px;font-size:13.5px;color:#1d1b31;"><span style="letter-spacing:-0.1px">6</span><span style="margin-left:-1.5px;margin-right:-1.1px">1</span><span style="letter-spacing:-0.3px">.</span><span style="letter-spacing:-0.1px">9</span><span class="pc">%</span></div><div class="t" style="left:889.10px;width:300px;text-align:center;top:316.00px;font-size:13.5px;color:#1d1b31;"><span style="letter-spacing:-0.1px">0</span></div><div class="t" style="left:1011.20px;width:300px;text-align:center;top:316.00px;font-size:13.5px;color:#1d1b31;"><span style="letter-spacing:-0.1px">0</span></div><div class="t" style="left:1140.80px;width:300px;text-align:center;top:316.00px;font-size:13.5px;color:#1d1b31;"><span style="letter-spacing:-0.1px">0</span></div><div class="t" style="left:1275.30px;width:300px;text-align:center;top:316.00px;font-size:13.5px;color:#1d1b31;"><span style="letter-spacing:-0.1px">0</span></div><div class="t" style="left:1407.80px;width:300px;text-align:center;top:316.00px;font-size:13.5px;color:#1d1b31;"><span style="letter-spacing:-0.1px">6</span><span style="margin-left:-1.5px;margin-right:-1.1px">1</span><span class="pc">%</span></div><div class="t" style="left:1527.50px;width:300px;text-align:center;top:316.00px;font-size:13.5px;color:#1d1b31;"><span style="letter-spacing:-0.1px">3</span><span style="letter-spacing:-0.1px">8</span><span class="pc">%</span></div><div class="t" style="left:1666.90px;width:300px;text-align:center;top:316.00px;font-size:13.5px;color:#1d1b31;"><span style="margin-left:-1.5px;margin-right:-1.1px">1</span><span class="pc">%</span></div><div style="position:absolute;left:274px;top:345px;width:1616px;height:1px;background:#eceef3;"></div><div class="t" style="left:286.20px;top:361.00px;font-size:13.5px;color:#1d1b31;letter-spacing:0.65px;">Vahagn Sargsyan</div><div class="t" style="left:368.00px;width:300px;text-align:center;top:361.00px;font-size:13.5px;color:#1d1b31;"><span style="letter-spacing:-0.1px">0</span></div><div class="t" style="left:512.40px;width:300px;text-align:center;top:361.00px;font-size:13.5px;color:#1d1b31;"><span style="letter-spacing:-0.1px">0</span><span class="pc">%</span></div><div class="t" style="left:644.40px;width:300px;text-align:center;top:361.00px;font-size:13.5px;color:#1d1b31;"><span style="letter-spacing:-0.1px">0</span><span class="pc">%</span></div><div class="t" style="left:768.70px;width:300px;text-align:center;top:361.00px;font-size:13.5px;color:#1d1b31;"><span style="letter-spacing:-0.1px">0</span><span class="pc">%</span></div><div class="t" style="left:889.10px;width:300px;text-align:center;top:361.00px;font-size:13.5px;color:#1d1b31;"><span style="letter-spacing:-0.1px">0</span></div><div class="t" style="left:1011.20px;width:300px;text-align:center;top:361.00px;font-size:13.5px;color:#1d1b31;"><span style="letter-spacing:-0.1px">0</span></div><div class="t" style="left:1140.80px;width:300px;text-align:center;top:361.00px;font-size:13.5px;color:#1d1b31;"><span style="letter-spacing:-0.1px">0</span></div><div class="t" style="left:1275.30px;width:300px;text-align:center;top:361.00px;font-size:13.5px;color:#1d1b31;"><span style="letter-spacing:-0.1px">0</span></div><div class="t" style="left:1407.80px;width:300px;text-align:center;top:361.00px;font-size:13.5px;color:#1d1b31;"><span style="letter-spacing:-0.1px">0</span><span class="pc">%</span></div><div class="t" style="left:1527.50px;width:300px;text-align:center;top:361.00px;font-size:13.5px;color:#1d1b31;"><span style="letter-spacing:-0.1px">0</span><span class="pc">%</span></div><div class="t" style="left:1666.90px;width:300px;text-align:center;top:361.00px;font-size:13.5px;color:#1d1b31;"><span style="letter-spacing:-0.1px">0</span><span class="pc">%</span></div><div style="position:absolute;left:274px;top:389px;width:1616px;height:1px;background:#eceef3;"></div><div class="t" style="left:286.20px;top:405.00px;font-size:13.5px;color:#1d1b31;letter-spacing:0.65px;">Marine Galstyan</div><div class="t" style="left:368.00px;width:300px;text-align:center;top:405.00px;font-size:13.5px;color:#1d1b31;"><span style="letter-spacing:-0.1px">2</span><span style="letter-spacing:0.6px">h</span><span style="letter-spacing:-0.4px"> </span><span style="letter-spacing:-0.1px">0</span><span style="letter-spacing:-0.1px">6</span><span style="letter-spacing:0.6px">m</span></div><div class="t" style="left:512.40px;width:300px;text-align:center;top:405.00px;font-size:13.5px;color:#1d1b31;"><span style="letter-spacing:-0.1px">2</span><span style="letter-spacing:-0.1px">2</span><span style="letter-spacing:-0.3px">.</span><span style="margin-left:-1.5px;margin-right:-1.1px">1</span><span style="letter-spacing:-0.1px">6</span><span class="pc">%</span></div><div class="t" style="left:644.40px;width:300px;text-align:center;top:405.00px;font-size:13.5px;color:#1d1b31;"><span style="letter-spacing:-0.1px">4</span><span style="letter-spacing:-0.3px">.</span><span style="letter-spacing:-0.1px">2</span><span style="letter-spacing:-0.1px">8</span><span class="pc">%</span></div><div class="t" style="left:768.70px;width:300px;text-align:center;top:405.00px;font-size:13.5px;color:#1d1b31;"><span style="letter-spacing:-0.1px">7</span><span style="letter-spacing:-0.1px">3</span><span style="letter-spacing:-0.3px">.</span><span style="letter-spacing:-0.1px">5</span><span style="letter-spacing:-0.1px">7</span><span class="pc">%</span></div><div class="t" style="left:889.10px;width:300px;text-align:center;top:405.00px;font-size:13.5px;color:#1d1b31;"><span style="letter-spacing:-0.1px">0</span></div><div class="t" style="left:1011.20px;width:300px;text-align:center;top:405.00px;font-size:13.5px;color:#1d1b31;"><span style="letter-spacing:-0.1px">0</span></div><div class="t" style="left:1140.80px;width:300px;text-align:center;top:405.00px;font-size:13.5px;color:#1d1b31;"><span style="letter-spacing:-0.1px">0</span></div><div class="t" style="left:1275.30px;width:300px;text-align:center;top:405.00px;font-size:13.5px;color:#1d1b31;"><span style="letter-spacing:-0.1px">0</span></div><div class="t" style="left:1407.80px;width:300px;text-align:center;top:405.00px;font-size:13.5px;color:#1d1b31;"><span style="letter-spacing:-0.1px">8</span><span style="letter-spacing:-0.1px">9</span><span class="pc">%</span></div><div class="t" style="left:1527.50px;width:300px;text-align:center;top:405.00px;font-size:13.5px;color:#1d1b31;"><span style="margin-left:-1.5px;margin-right:-1.1px">1</span><span style="margin-left:-1.5px;margin-right:-1.1px">1</span><span class="pc">%</span></div><div class="t" style="left:1666.90px;width:300px;text-align:center;top:405.00px;font-size:13.5px;color:#1d1b31;"><span style="letter-spacing:-0.1px">0</span><span class="pc">%</span></div><div style="position:absolute;left:274px;top:434px;width:1616px;height:1px;background:#eceef3;"></div><div class="t" style="left:286.20px;top:450.00px;font-size:13.5px;color:#1d1b31;letter-spacing:0.65px;">Armen Grigoryan</div><div class="t" style="left:368.00px;width:300px;text-align:center;top:450.00px;font-size:13.5px;color:#1d1b31;"><span style="letter-spacing:-0.1px">2</span><span style="letter-spacing:0.6px">h</span><span style="letter-spacing:-0.4px"> </span><span style="letter-spacing:-0.1px">2</span><span style="letter-spacing:-0.1px">3</span><span style="letter-spacing:0.6px">m</span></div><div class="t" style="left:512.40px;width:300px;text-align:center;top:450.00px;font-size:13.5px;color:#1d1b31;"><span style="letter-spacing:-0.1px">2</span><span style="margin-left:-1.5px;margin-right:-1.1px">1</span><span style="letter-spacing:-0.3px">.</span><span style="letter-spacing:-0.1px">2</span><span style="margin-left:-1.5px;margin-right:-1.1px">1</span><span class="pc">%</span></div><div class="t" style="left:644.40px;width:300px;text-align:center;top:450.00px;font-size:13.5px;color:#1d1b31;"><span style="letter-spacing:-0.1px">5</span><span class="pc">%</span></div><div class="t" style="left:768.70px;width:300px;text-align:center;top:450.00px;font-size:13.5px;color:#1d1b31;"><span style="letter-spacing:-0.1px">7</span><span style="letter-spacing:-0.1px">3</span><span style="letter-spacing:-0.3px">.</span><span style="letter-spacing:-0.1px">7</span><span style="letter-spacing:-0.1px">9</span><span class="pc">%</span></div><div class="t" style="left:889.10px;width:300px;text-align:center;top:450.00px;font-size:13.5px;color:#1d1b31;"><span style="letter-spacing:-0.1px">0</span></div><div class="t" style="left:1011.20px;width:300px;text-align:center;top:450.00px;font-size:13.5px;color:#1d1b31;"><span style="letter-spacing:-0.1px">0</span></div><div class="t" style="left:1140.80px;width:300px;text-align:center;top:450.00px;font-size:13.5px;color:#1d1b31;"><span style="letter-spacing:-0.1px">0</span></div><div class="t" style="left:1275.30px;width:300px;text-align:center;top:450.00px;font-size:13.5px;color:#1d1b31;"><span style="letter-spacing:-0.1px">0</span></div><div class="t" style="left:1407.80px;width:300px;text-align:center;top:450.00px;font-size:13.5px;color:#1d1b31;"><span style="letter-spacing:-0.1px">9</span><span style="letter-spacing:-0.1px">6</span><span class="pc">%</span></div><div class="t" style="left:1527.50px;width:300px;text-align:center;top:450.00px;font-size:13.5px;color:#1d1b31;"><span style="letter-spacing:-0.1px">4</span><span class="pc">%</span></div><div class="t" style="left:1666.90px;width:300px;text-align:center;top:450.00px;font-size:13.5px;color:#1d1b31;"><span style="letter-spacing:-0.1px">0</span><span class="pc">%</span></div><div style="position:absolute;left:274px;top:478px;width:1616px;height:1px;background:#eceef3;"></div><div class="t" style="left:286.20px;top:494.00px;font-size:13.5px;color:#1d1b31;letter-spacing:0.65px;">Christopher El</div><div class="t" style="left:368.00px;width:300px;text-align:center;top:494.00px;font-size:13.5px;color:#1d1b31;"><span style="letter-spacing:-0.1px">3</span><span style="letter-spacing:0.6px">h</span><span style="letter-spacing:-0.4px"> </span><span style="letter-spacing:-0.1px">0</span><span style="letter-spacing:-0.1px">4</span><span style="letter-spacing:0.6px">m</span></div><div class="t" style="left:512.40px;width:300px;text-align:center;top:494.00px;font-size:13.5px;color:#1d1b31;"><span style="margin-left:-1.5px;margin-right:-1.1px">1</span><span style="margin-left:-1.5px;margin-right:-1.1px">1</span><span style="letter-spacing:-0.3px">.</span><span style="letter-spacing:-0.1px">5</span><span style="letter-spacing:-0.1px">7</span><span class="pc">%</span></div><div class="t" style="left:644.40px;width:300px;text-align:center;top:494.00px;font-size:13.5px;color:#1d1b31;"><span style="letter-spacing:-0.1px">2</span><span style="letter-spacing:-0.3px">.</span><span style="letter-spacing:-0.1px">2</span><span style="letter-spacing:-0.1px">9</span><span class="pc">%</span></div><div class="t" style="left:768.70px;width:300px;text-align:center;top:494.00px;font-size:13.5px;color:#1d1b31;"><span style="letter-spacing:-0.1px">8</span><span style="letter-spacing:-0.1px">6</span><span style="letter-spacing:-0.3px">.</span><span style="margin-left:-1.5px;margin-right:-1.1px">1</span><span style="letter-spacing:-0.1px">3</span><span class="pc">%</span></div><div class="t" style="left:889.10px;width:300px;text-align:center;top:494.00px;font-size:13.5px;color:#1d1b31;"><span style="letter-spacing:-0.1px">0</span></div><div class="t" style="left:1011.20px;width:300px;text-align:center;top:494.00px;font-size:13.5px;color:#1d1b31;"><span style="letter-spacing:-0.1px">0</span></div><div class="t" style="left:1140.80px;width:300px;text-align:center;top:494.00px;font-size:13.5px;color:#1d1b31;"><span style="letter-spacing:-0.1px">0</span></div><div class="t" style="left:1275.30px;width:300px;text-align:center;top:494.00px;font-size:13.5px;color:#1d1b31;"><span style="letter-spacing:-0.1px">0</span></div><div class="t" style="left:1407.80px;width:300px;text-align:center;top:494.00px;font-size:13.5px;color:#1d1b31;"><span style="letter-spacing:-0.1px">9</span><span style="letter-spacing:-0.1px">4</span><span class="pc">%</span></div><div class="t" style="left:1527.50px;width:300px;text-align:center;top:494.00px;font-size:13.5px;color:#1d1b31;"><span style="letter-spacing:-0.1px">6</span><span class="pc">%</span></div><div class="t" style="left:1666.90px;width:300px;text-align:center;top:494.00px;font-size:13.5px;color:#1d1b31;"><span style="letter-spacing:-0.1px">0</span><span class="pc">%</span></div><div style="position:absolute;left:274px;top:523px;width:1616px;height:1px;background:#eceef3;"></div><div class="t" style="left:286.20px;top:539.00px;font-size:13.5px;color:#1d1b31;letter-spacing:0.65px;">Arsen Sargsyan</div><div class="t" style="left:368.00px;width:300px;text-align:center;top:539.00px;font-size:13.5px;color:#1d1b31;"><span style="letter-spacing:-0.1px">0</span></div><div class="t" style="left:512.40px;width:300px;text-align:center;top:539.00px;font-size:13.5px;color:#1d1b31;"><span style="letter-spacing:-0.1px">0</span><span class="pc">%</span></div><div class="t" style="left:644.40px;width:300px;text-align:center;top:539.00px;font-size:13.5px;color:#1d1b31;"><span style="letter-spacing:-0.1px">0</span><span class="pc">%</span></div><div class="t" style="left:768.70px;width:300px;text-align:center;top:539.00px;font-size:13.5px;color:#1d1b31;"><span style="letter-spacing:-0.1px">0</span><span class="pc">%</span></div><div class="t" style="left:889.10px;width:300px;text-align:center;top:539.00px;font-size:13.5px;color:#1d1b31;"><span style="letter-spacing:-0.1px">0</span></div><div class="t" style="left:1011.20px;width:300px;text-align:center;top:539.00px;font-size:13.5px;color:#1d1b31;"><span style="letter-spacing:-0.1px">0</span></div><div class="t" style="left:1140.80px;width:300px;text-align:center;top:539.00px;font-size:13.5px;color:#1d1b31;"><span style="letter-spacing:-0.1px">0</span></div><div class="t" style="left:1275.30px;width:300px;text-align:center;top:539.00px;font-size:13.5px;color:#1d1b31;"><span style="letter-spacing:-0.1px">0</span></div><div class="t" style="left:1407.80px;width:300px;text-align:center;top:539.00px;font-size:13.5px;color:#1d1b31;"><span style="letter-spacing:-0.1px">0</span><span class="pc">%</span></div><div class="t" style="left:1527.50px;width:300px;text-align:center;top:539.00px;font-size:13.5px;color:#1d1b31;"><span style="letter-spacing:-0.1px">0</span><span class="pc">%</span></div><div class="t" style="left:1666.90px;width:300px;text-align:center;top:539.00px;font-size:13.5px;color:#1d1b31;"><span style="letter-spacing:-0.1px">0</span><span class="pc">%</span></div><div style="position:absolute;left:274px;top:567px;width:1616px;height:1px;background:#eceef3;"></div><div class="t" style="left:286.20px;top:583.00px;font-size:13.5px;color:#1d1b31;letter-spacing:0.65px;">Arline M</div><div class="t" style="left:368.00px;width:300px;text-align:center;top:583.00px;font-size:13.5px;color:#1d1b31;"><span style="letter-spacing:-0.1px">0</span></div><div class="t" style="left:512.40px;width:300px;text-align:center;top:583.00px;font-size:13.5px;color:#1d1b31;"><span style="letter-spacing:-0.1px">0</span><span class="pc">%</span></div><div class="t" style="left:644.40px;width:300px;text-align:center;top:583.00px;font-size:13.5px;color:#1d1b31;"><span style="letter-spacing:-0.1px">0</span><span class="pc">%</span></div><div class="t" style="left:768.70px;width:300px;text-align:center;top:583.00px;font-size:13.5px;color:#1d1b31;"><span style="letter-spacing:-0.1px">0</span><span class="pc">%</span></div><div class="t" style="left:889.10px;width:300px;text-align:center;top:583.00px;font-size:13.5px;color:#1d1b31;"><span style="letter-spacing:-0.1px">0</span></div><div class="t" style="left:1011.20px;width:300px;text-align:center;top:583.00px;font-size:13.5px;color:#1d1b31;"><span style="letter-spacing:-0.1px">0</span></div><div class="t" style="left:1140.80px;width:300px;text-align:center;top:583.00px;font-size:13.5px;color:#1d1b31;"><span style="letter-spacing:-0.1px">0</span></div><div class="t" style="left:1275.30px;width:300px;text-align:center;top:583.00px;font-size:13.5px;color:#1d1b31;"><span style="letter-spacing:-0.1px">0</span></div><div class="t" style="left:1407.80px;width:300px;text-align:center;top:583.00px;font-size:13.5px;color:#1d1b31;"><span style="letter-spacing:-0.1px">0</span><span class="pc">%</span></div><div class="t" style="left:1527.50px;width:300px;text-align:center;top:583.00px;font-size:13.5px;color:#1d1b31;"><span style="letter-spacing:-0.1px">0</span><span class="pc">%</span></div><div class="t" style="left:1666.90px;width:300px;text-align:center;top:583.00px;font-size:13.5px;color:#1d1b31;"><span style="letter-spacing:-0.1px">0</span><span class="pc">%</span></div><div style="position:absolute;left:274px;top:612px;width:1616px;height:1px;background:#eceef3;"></div><div class="t" style="left:286.20px;top:628.00px;font-size:13.5px;color:#1d1b31;letter-spacing:0.65px;">Marina Berberian</div><div class="t" style="left:368.00px;width:300px;text-align:center;top:628.00px;font-size:13.5px;color:#1d1b31;"><span style="margin-left:-1.5px;margin-right:-1.1px">1</span><span style="letter-spacing:-0.1px">0</span><span style="letter-spacing:0.6px">h</span><span style="letter-spacing:-0.4px"> </span><span style="letter-spacing:-0.1px">3</span><span style="letter-spacing:-0.1px">9</span><span style="letter-spacing:0.6px">m</span></div><div class="t" style="left:512.40px;width:300px;text-align:center;top:628.00px;font-size:13.5px;color:#1d1b31;"><span style="letter-spacing:-0.1px">3</span><span style="letter-spacing:-0.1px">3</span><span style="letter-spacing:-0.3px">.</span><span style="letter-spacing:-0.1px">3</span><span style="letter-spacing:-0.1px">9</span><span class="pc">%</span></div><div class="t" style="left:644.40px;width:300px;text-align:center;top:628.00px;font-size:13.5px;color:#1d1b31;"><span style="letter-spacing:-0.1px">8</span><span style="letter-spacing:-0.3px">.</span><span style="letter-spacing:-0.1px">0</span><span style="letter-spacing:-0.1px">9</span><span class="pc">%</span></div><div class="t" style="left:768.70px;width:300px;text-align:center;top:628.00px;font-size:13.5px;color:#1d1b31;"><span style="letter-spacing:-0.1px">5</span><span style="letter-spacing:-0.1px">8</span><span style="letter-spacing:-0.3px">.</span><span style="letter-spacing:-0.1px">5</span><span style="letter-spacing:-0.1px">2</span><span class="pc">%</span></div><div class="t" style="left:889.10px;width:300px;text-align:center;top:628.00px;font-size:13.5px;color:#1d1b31;"><span style="letter-spacing:-0.1px">0</span></div><div class="t" style="left:1011.20px;width:300px;text-align:center;top:628.00px;font-size:13.5px;color:#1d1b31;"><span style="letter-spacing:-0.1px">0</span></div><div class="t" style="left:1140.80px;width:300px;text-align:center;top:628.00px;font-size:13.5px;color:#1d1b31;"><span style="letter-spacing:-0.1px">0</span></div><div class="t" style="left:1275.30px;width:300px;text-align:center;top:628.00px;font-size:13.5px;color:#1d1b31;"><span style="letter-spacing:-0.1px">0</span></div><div class="t" style="left:1407.80px;width:300px;text-align:center;top:628.00px;font-size:13.5px;color:#1d1b31;"><span style="margin-left:-1.5px;margin-right:-1.1px">1</span><span style="letter-spacing:-0.1px">5</span><span class="pc">%</span></div><div class="t" style="left:1527.50px;width:300px;text-align:center;top:628.00px;font-size:13.5px;color:#1d1b31;"><span style="letter-spacing:-0.1px">8</span><span style="letter-spacing:-0.1px">5</span><span class="pc">%</span></div><div class="t" style="left:1666.90px;width:300px;text-align:center;top:628.00px;font-size:13.5px;color:#1d1b31;"><span style="letter-spacing:-0.1px">0</span><span class="pc">%</span></div><div style="position:absolute;left:274px;top:656px;width:1616px;height:1px;background:#eceef3;"></div><div class="t" style="left:286.20px;top:672.00px;font-size:13.5px;color:#1d1b31;letter-spacing:0.65px;">Mariam Kocharyan</div><div class="t" style="left:368.00px;width:300px;text-align:center;top:672.00px;font-size:13.5px;color:#1d1b31;"><span style="margin-left:-1.5px;margin-right:-1.1px">1</span><span style="letter-spacing:-0.1px">0</span><span style="letter-spacing:0.6px">h</span><span style="letter-spacing:-0.4px"> </span><span style="letter-spacing:-0.1px">5</span><span style="letter-spacing:-0.1px">0</span><span style="letter-spacing:0.6px">m</span></div><div class="t" style="left:512.40px;width:300px;text-align:center;top:672.00px;font-size:13.5px;color:#1d1b31;"><span style="margin-left:-1.5px;margin-right:-1.1px">1</span><span style="letter-spacing:-0.1px">0</span><span style="letter-spacing:-0.3px">.</span><span style="letter-spacing:-0.1px">5</span><span class="pc">%</span></div><div class="t" style="left:644.40px;width:300px;text-align:center;top:672.00px;font-size:13.5px;color:#1d1b31;"><span style="margin-left:-1.5px;margin-right:-1.1px">1</span><span style="letter-spacing:-0.3px">.</span><span style="letter-spacing:-0.1px">8</span><span class="pc">%</span></div><div class="t" style="left:768.70px;width:300px;text-align:center;top:672.00px;font-size:13.5px;color:#1d1b31;"><span style="letter-spacing:-0.1px">8</span><span style="letter-spacing:-0.1px">7</span><span style="letter-spacing:-0.3px">.</span><span style="letter-spacing:-0.1px">6</span><span style="letter-spacing:-0.1px">9</span><span class="pc">%</span></div><div class="t" style="left:889.10px;width:300px;text-align:center;top:672.00px;font-size:13.5px;color:#1d1b31;"><span style="letter-spacing:-0.1px">0</span></div><div class="t" style="left:1011.20px;width:300px;text-align:center;top:672.00px;font-size:13.5px;color:#1d1b31;"><span style="letter-spacing:-0.1px">0</span></div><div class="t" style="left:1140.80px;width:300px;text-align:center;top:672.00px;font-size:13.5px;color:#1d1b31;"><span style="letter-spacing:-0.1px">0</span></div><div class="t" style="left:1275.30px;width:300px;text-align:center;top:672.00px;font-size:13.5px;color:#1d1b31;"><span style="letter-spacing:-0.1px">0</span></div><div class="t" style="left:1407.80px;width:300px;text-align:center;top:672.00px;font-size:13.5px;color:#1d1b31;"><span style="margin-left:-1.5px;margin-right:-1.1px">1</span><span style="letter-spacing:-0.1px">6</span><span class="pc">%</span></div><div class="t" style="left:1527.50px;width:300px;text-align:center;top:672.00px;font-size:13.5px;color:#1d1b31;"><span style="letter-spacing:-0.1px">8</span><span style="letter-spacing:-0.1px">4</span><span class="pc">%</span></div><div class="t" style="left:1666.90px;width:300px;text-align:center;top:672.00px;font-size:13.5px;color:#1d1b31;"><span style="letter-spacing:-0.1px">0</span><span class="pc">%</span></div><div style="position:absolute;left:274px;top:701px;width:1616px;height:1px;background:#eceef3;"></div><div class="t" style="left:286.20px;top:717.00px;font-size:13.5px;color:#1d1b31;letter-spacing:0.65px;">Sargis Vorskanyan</div><div class="t" style="left:368.00px;width:300px;text-align:center;top:717.00px;font-size:13.5px;color:#1d1b31;"><span style="letter-spacing:-0.1px">2</span><span style="letter-spacing:0.6px">h</span><span style="letter-spacing:-0.4px"> </span><span style="letter-spacing:-0.1px">4</span><span style="margin-left:-1.5px;margin-right:-1.1px">1</span><span style="letter-spacing:0.6px">m</span></div><div class="t" style="left:512.40px;width:300px;text-align:center;top:717.00px;font-size:13.5px;color:#1d1b31;"><span style="letter-spacing:-0.1px">4</span><span style="letter-spacing:-0.1px">0</span><span style="letter-spacing:-0.3px">.</span><span style="letter-spacing:-0.1px">4</span><span style="letter-spacing:-0.1px">9</span><span class="pc">%</span></div><div class="t" style="left:644.40px;width:300px;text-align:center;top:717.00px;font-size:13.5px;color:#1d1b31;"><span style="letter-spacing:-0.1px">7</span><span style="letter-spacing:-0.3px">.</span><span style="letter-spacing:-0.1px">6</span><span style="letter-spacing:-0.1px">6</span><span class="pc">%</span></div><div class="t" style="left:768.70px;width:300px;text-align:center;top:717.00px;font-size:13.5px;color:#1d1b31;"><span style="letter-spacing:-0.1px">5</span><span style="margin-left:-1.5px;margin-right:-1.1px">1</span><span style="letter-spacing:-0.3px">.</span><span style="letter-spacing:-0.1px">8</span><span style="letter-spacing:-0.1px">4</span><span class="pc">%</span></div><div class="t" style="left:889.10px;width:300px;text-align:center;top:717.00px;font-size:13.5px;color:#1d1b31;"><span style="letter-spacing:-0.1px">0</span></div><div class="t" style="left:1011.20px;width:300px;text-align:center;top:717.00px;font-size:13.5px;color:#1d1b31;"><span style="letter-spacing:-0.1px">0</span></div><div class="t" style="left:1140.80px;width:300px;text-align:center;top:717.00px;font-size:13.5px;color:#1d1b31;"><span style="letter-spacing:-0.1px">0</span></div><div class="t" style="left:1275.30px;width:300px;text-align:center;top:717.00px;font-size:13.5px;color:#1d1b31;"><span style="letter-spacing:-0.1px">0</span></div><div class="t" style="left:1407.80px;width:300px;text-align:center;top:717.00px;font-size:13.5px;color:#1d1b31;"><span style="letter-spacing:-0.1px">9</span><span style="letter-spacing:-0.1px">6</span><span class="pc">%</span></div><div class="t" style="left:1527.50px;width:300px;text-align:center;top:717.00px;font-size:13.5px;color:#1d1b31;"><span style="letter-spacing:-0.1px">4</span><span class="pc">%</span></div><div class="t" style="left:1666.90px;width:300px;text-align:center;top:717.00px;font-size:13.5px;color:#1d1b31;"><span style="letter-spacing:-0.1px">0</span><span class="pc">%</span></div><div style="position:absolute;left:274px;top:745px;width:1616px;height:1px;background:#eceef3;"></div><div class="t" style="left:286.20px;top:761.00px;font-size:13.5px;color:#1d1b31;letter-spacing:0.65px;">Liana Papyan</div><div class="t" style="left:368.00px;width:300px;text-align:center;top:761.00px;font-size:13.5px;color:#1d1b31;"><span style="letter-spacing:-0.1px">2</span><span style="letter-spacing:0.6px">h</span><span style="letter-spacing:-0.4px"> </span><span style="margin-left:-1.5px;margin-right:-1.1px">1</span><span style="letter-spacing:-0.1px">5</span><span style="letter-spacing:0.6px">m</span></div><div class="t" style="left:512.40px;width:300px;text-align:center;top:761.00px;font-size:13.5px;color:#1d1b31;"><span style="letter-spacing:-0.1px">2</span><span style="letter-spacing:-0.1px">8</span><span style="letter-spacing:-0.3px">.</span><span style="letter-spacing:-0.1px">0</span><span style="letter-spacing:-0.1px">2</span><span class="pc">%</span></div><div class="t" style="left:644.40px;width:300px;text-align:center;top:761.00px;font-size:13.5px;color:#1d1b31;"><span style="margin-left:-1.5px;margin-right:-1.1px">1</span><span style="margin-left:-1.5px;margin-right:-1.1px">1</span><span style="letter-spacing:-0.3px">.</span><span style="letter-spacing:-0.1px">4</span><span style="letter-spacing:-0.1px">9</span><span class="pc">%</span></div><div class="t" style="left:768.70px;width:300px;text-align:center;top:761.00px;font-size:13.5px;color:#1d1b31;"><span style="letter-spacing:-0.1px">6</span><span style="letter-spacing:-0.1px">0</span><span style="letter-spacing:-0.3px">.</span><span style="letter-spacing:-0.1px">4</span><span style="letter-spacing:-0.1px">9</span><span class="pc">%</span></div><div class="t" style="left:889.10px;width:300px;text-align:center;top:761.00px;font-size:13.5px;color:#1d1b31;"><span style="letter-spacing:-0.1px">0</span></div><div class="t" style="left:1011.20px;width:300px;text-align:center;top:761.00px;font-size:13.5px;color:#1d1b31;"><span style="letter-spacing:-0.1px">0</span></div><div class="t" style="left:1140.80px;width:300px;text-align:center;top:761.00px;font-size:13.5px;color:#1d1b31;"><span style="letter-spacing:-0.1px">0</span></div><div class="t" style="left:1275.30px;width:300px;text-align:center;top:761.00px;font-size:13.5px;color:#1d1b31;"><span style="letter-spacing:-0.1px">0</span></div><div class="t" style="left:1407.80px;width:300px;text-align:center;top:761.00px;font-size:13.5px;color:#1d1b31;"><span style="letter-spacing:-0.1px">7</span><span style="letter-spacing:-0.1px">0</span><span class="pc">%</span></div><div class="t" style="left:1527.50px;width:300px;text-align:center;top:761.00px;font-size:13.5px;color:#1d1b31;"><span style="letter-spacing:-0.1px">2</span><span style="letter-spacing:-0.1px">9</span><span class="pc">%</span></div><div class="t" style="left:1666.90px;width:300px;text-align:center;top:761.00px;font-size:13.5px;color:#1d1b31;"><span style="margin-left:-1.5px;margin-right:-1.1px">1</span><span class="pc">%</span></div><div style="position:absolute;left:274px;top:790px;width:1616px;height:1px;background:#eceef3;"></div><div class="t" style="left:286.20px;top:806.00px;font-size:13.5px;color:#1d1b31;letter-spacing:0.65px;">Grigor Sahakyan</div><div class="t" style="left:368.00px;width:300px;text-align:center;top:806.00px;font-size:13.5px;color:#1d1b31;"><span style="letter-spacing:-0.1px">2</span><span style="letter-spacing:0.6px">h</span><span style="letter-spacing:-0.4px"> </span><span style="letter-spacing:-0.1px">4</span><span style="letter-spacing:-0.1px">2</span><span style="letter-spacing:0.6px">m</span></div><div class="t" style="left:512.40px;width:300px;text-align:center;top:806.00px;font-size:13.5px;color:#1d1b31;"><span style="letter-spacing:-0.1px">2</span><span style="letter-spacing:-0.1px">4</span><span style="letter-spacing:-0.3px">.</span><span style="letter-spacing:-0.1px">4</span><span style="letter-spacing:-0.1px">4</span><span class="pc">%</span></div><div class="t" style="left:644.40px;width:300px;text-align:center;top:806.00px;font-size:13.5px;color:#1d1b31;"><span style="letter-spacing:-0.1px">9</span><span style="letter-spacing:-0.3px">.</span><span style="letter-spacing:-0.1px">6</span><span style="margin-left:-1.5px;margin-right:-1.1px">1</span><span class="pc">%</span></div><div class="t" style="left:768.70px;width:300px;text-align:center;top:806.00px;font-size:13.5px;color:#1d1b31;"><span style="letter-spacing:-0.1px">6</span><span style="letter-spacing:-0.1px">5</span><span style="letter-spacing:-0.3px">.</span><span style="letter-spacing:-0.1px">9</span><span style="letter-spacing:-0.1px">4</span><span class="pc">%</span></div><div class="t" style="left:889.10px;width:300px;text-align:center;top:806.00px;font-size:13.5px;color:#1d1b31;"><span style="letter-spacing:-0.1px">0</span></div><div class="t" style="left:1011.20px;width:300px;text-align:center;top:806.00px;font-size:13.5px;color:#1d1b31;"><span style="letter-spacing:-0.1px">0</span></div><div class="t" style="left:1140.80px;width:300px;text-align:center;top:806.00px;font-size:13.5px;color:#1d1b31;"><span style="letter-spacing:-0.1px">0</span></div><div class="t" style="left:1275.30px;width:300px;text-align:center;top:806.00px;font-size:13.5px;color:#1d1b31;"><span style="letter-spacing:-0.1px">0</span></div><div class="t" style="left:1407.80px;width:300px;text-align:center;top:806.00px;font-size:13.5px;color:#1d1b31;"><span style="letter-spacing:-0.1px">4</span><span style="letter-spacing:-0.1px">3</span><span class="pc">%</span></div><div class="t" style="left:1527.50px;width:300px;text-align:center;top:806.00px;font-size:13.5px;color:#1d1b31;"><span style="letter-spacing:-0.1px">5</span><span style="letter-spacing:-0.1px">7</span><span class="pc">%</span></div><div class="t" style="left:1666.90px;width:300px;text-align:center;top:806.00px;font-size:13.5px;color:#1d1b31;"><span style="letter-spacing:-0.1px">0</span><span class="pc">%</span></div>
</body></html>
